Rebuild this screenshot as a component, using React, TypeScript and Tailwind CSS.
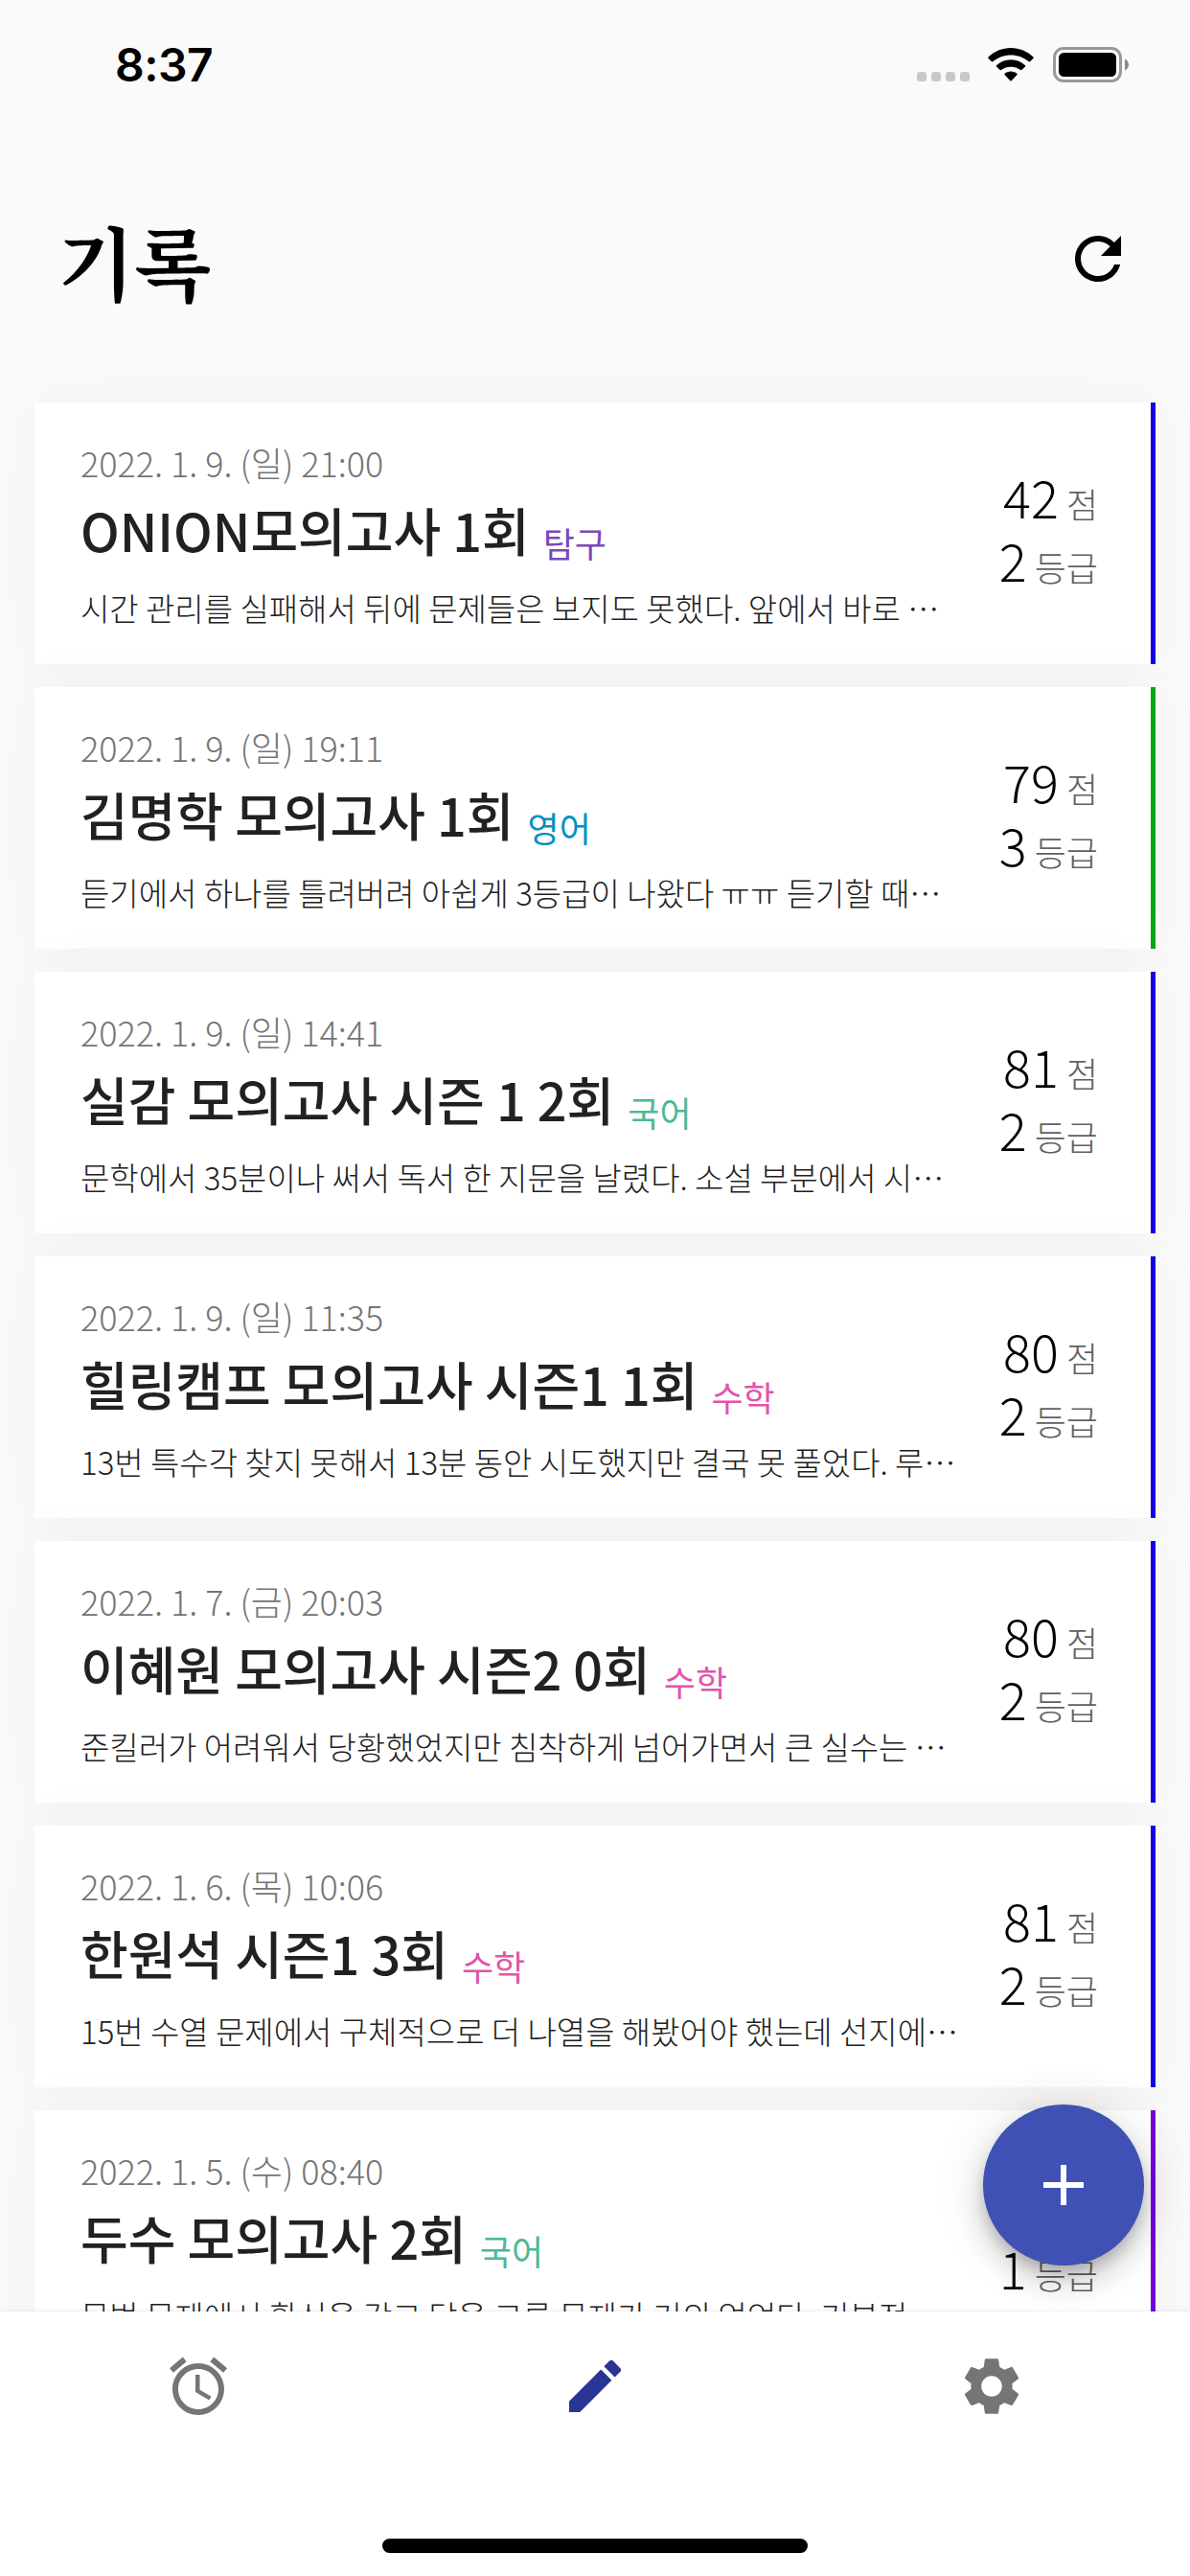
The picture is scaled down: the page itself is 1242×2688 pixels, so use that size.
import { MdAccessAlarm, MdAdd, MdCreate, MdRefresh, MdSettings } from "react-icons/md";

type Rec = {
  date: string;
  title: string;
  subject: string;
  subjectColor: string;
  memo: string;
  score: number;
  grade: number;
  bar: string;
};

const BLUE = "border-[#1400e0]";
const MATH = "text-[#e255a8]";
const KOREAN = "text-[#4db898]";

const records: Rec[] = [
  { date: "2022. 1. 9. (일) 21:00", title: "ONION모의고사 1회", subject: "탐구", subjectColor: "text-[#7a48bb]", memo: "시간 관리를 실패해서 뒤에 문제들은 보지도 못했다. 앞에서 바로 ⋯", score: 42, grade: 2, bar: BLUE },
  { date: "2022. 1. 9. (일) 19:11", title: "김명학 모의고사 1회", subject: "영어", subjectColor: "text-[#0090c4]", memo: "듣기에서 하나를 틀려버려 아쉽게 3등급이 나왔다 ㅠㅠ 듣기할 때⋯", score: 79, grade: 3, bar: "border-[#0aa514]" },
  { date: "2022. 1. 9. (일) 14:41", title: "실감 모의고사 시즌 1 2회", subject: "국어", subjectColor: KOREAN, memo: "문학에서 35분이나 써서 독서 한 지문을 날렸다. 소설 부분에서 시⋯", score: 81, grade: 2, bar: BLUE },
  { date: "2022. 1. 9. (일) 11:35", title: "힐링캠프 모의고사 시즌1 1회", subject: "수학", subjectColor: MATH, memo: "13번 특수각 찾지 못해서 13분 동안 시도했지만 결국 못 풀었다. 루⋯", score: 80, grade: 2, bar: BLUE },
  { date: "2022. 1. 7. (금) 20:03", title: "이혜원 모의고사 시즌2 0회", subject: "수학", subjectColor: MATH, memo: "준킬러가 어려워서 당황했었지만 침착하게 넘어가면서 큰 실수는 ⋯", score: 80, grade: 2, bar: BLUE },
  { date: "2022. 1. 6. (목) 10:06", title: "한원석 시즌1 3회", subject: "수학", subjectColor: MATH, memo: "15번 수열 문제에서 구체적으로 더 나열을 해봤어야 했는데 선지에⋯", score: 81, grade: 2, bar: BLUE },
  { date: "2022. 1. 5. (수) 08:40", title: "두수 모의고사 2회", subject: "국어", subjectColor: KOREAN, memo: "문법 문제에서 확신을 갖고 답을 고른 문제가 거의 없었다. 기본적", score: 95, grade: 1, bar: "border-[#7300dc]" },
];

function StatusBar() {
  return (
    <div className="flex h-[135px] items-center justify-between pl-[120px] pr-[64px]">
      <span className="font-['Inter'] text-[48px] font-semibold leading-none tracking-[-0.5px] text-black">8:37</span>
      <div className="flex items-center">
        <div className="mr-[19px] mt-[25px] flex gap-[5px]">
          {[0, 1, 2, 3].map((i) => (
            <span key={i} className="size-[10px] rounded-[3px] bg-[#c8c8c8]" />
          ))}
        </div>
        <svg className="mr-[20px] h-[36px] w-[48px]" viewBox="0 0 48 36">
          <path d="M24 0C33 0 41.500 3.500 47.500 9.600Q48 10.300 47.400 10.900L44 14.300Q43.500 14.800 42.800 14.200C37.500 9.800 31 7.400 24 7.400S10.500 9.800 5.200 14.200Q4.500 14.800 4 14.300L.6 10.900Q0 10.300 .5 9.600C6.500 3.500 15 0 24 0Z" />
          <path d="M24 12.300C29.800 12.300 34.900 14.500 39 18.200Q39.600 18.900 39 19.500L35.300 23.100Q34.700 23.600 34.100 23.100C31.300 20.900 27.800 19.700 24 19.700S16.700 20.900 13.900 23.100Q13.300 23.600 12.700 23.100L9 19.500Q8.400 18.900 9 18.200C13.100 14.500 18.200 12.300 24 12.300Z" />
          <path d="M24 24.600C26.500 24.600 28.700 25.500 30.500 26.900Q31 27.500 30.500 28.100L24.600 34.300Q24 34.800 23.400 34.300L17.500 28.100Q17 27.500 17.500 26.900C19.300 25.500 21.500 24.600 24 24.600Z" />
        </svg>
        <svg className="h-[37px] w-[79px]" viewBox="0 0 79 37">
          <rect x="1.500" y="1.500" width="69" height="34" rx="9.500" fill="none" stroke="#999" strokeWidth="3" />
          <rect x="6" y="6" width="60" height="25" rx="5.500" />
          <path d="M75 12.500C77.500 13.500 79 16 79 18.500S77.500 23.500 75 24.500Z" fill="#8a8a8a" />
        </svg>
      </div>
    </div>
  );
}

function Figure({ value, unit }: { value: number; unit: string }) {
  return (
    <div className="flex h-[66px] items-baseline gap-[8px] leading-[66px]">
      <span className="text-[54px] font-light text-black">{value}</span>
      <span className="text-[36px] font-light leading-none text-[#616161]">{unit}</span>
    </div>
  );
}

function Card({ r }: { r: Rec }) {
  return (
    <li className={`flex h-[273px] shrink-0 justify-between border-r-[5px] bg-white pl-[48px] pr-[55px] shadow-[0_0_60px_rgba(0,0,0,0.04)] ${r.bar}`}>
      <div className="flex flex-col whitespace-nowrap pt-[35px]">
        <span className="text-[36px] font-light leading-[54px] text-[#757575]">{r.date}</span>
        <div className="mt-[4px] flex h-[80px] items-baseline gap-[14px]">
          <span className="text-[54px] font-medium leading-[80px] text-[#212121]">{r.title}</span>
          <span className={`relative top-[6px] text-[36px] leading-none ${r.subjectColor}`}>{r.subject}</span>
        </div>
        <span className="mt-[14px] text-[33px] font-light leading-[54px] text-[#212121]">{r.memo}</span>
      </div>
      <div className="flex flex-col items-end pt-[65px]">
        <Figure value={r.score} unit="점" />
        <Figure value={r.grade} unit="등급" />
      </div>
    </li>
  );
}

export default function App() {
  return (
    <div className="flex h-[2688px] w-[1242px] flex-col overflow-hidden bg-[#fafafa] font-['Noto_Sans_CJK_KR',sans-serif]">
      <StatusBar />
      <header className="flex h-[285px] shrink-0 items-start justify-between pl-[60px] pr-[60px]">
        <h1 className="mt-[76px] font-['Noto_Serif_CJK_KR','Noto_Sans_CJK_KR',serif] text-[83px] font-bold leading-[120px] text-black">기록</h1>
        <MdRefresh className="mt-[99px] size-[72px] text-black" />
      </header>
      <main className="relative min-h-0 flex-1">
        <ul className="flex h-full flex-col gap-[24px] px-[36px] [clip-path:inset(-100px_0_0_0)]">
          {records.map((r) => (
            <Card key={r.date} r={r} />
          ))}
        </ul>
        <button className="absolute bottom-[48px] right-[48px] flex size-[168px] items-center justify-center rounded-full bg-[#3f51b5] text-white shadow-[0_9px_15px_-3px_rgba(0,0,0,0.2),0_18px_30px_rgba(0,0,0,0.14),0_3px_54px_rgba(0,0,0,0.12)]">
          <MdAdd className="size-[72px]" />
        </button>
      </main>
      <nav className="relative flex h-[276px] shrink-0 flex-col items-center bg-white shadow-[0_-1px_3px_rgba(0,0,0,0.08)]">
        <div className="grid h-[156px] w-full grid-cols-3 place-items-center text-[#757575]">
          <MdAccessAlarm className="size-[72px]" />
          <MdCreate className="size-[72px] text-[#283593]" />
          <MdSettings className="size-[72px]" />
        </div>
        <div className="mt-[81px] h-[15px] w-[444px] rounded-full bg-black" />
      </nav>
    </div>
  );
}
